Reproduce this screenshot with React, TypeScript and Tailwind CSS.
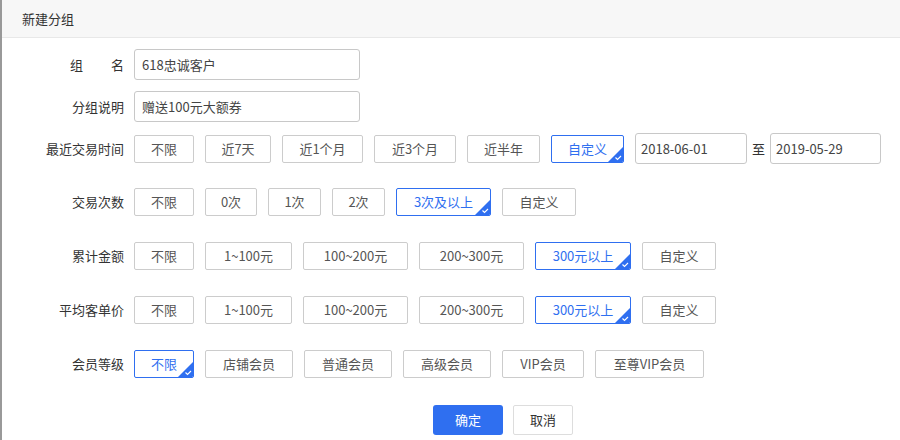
const FONT = { fontFamily: '"Noto Sans CJK SC", "Liberation Sans", sans-serif' };

type Opt = { t: string; w: number; on?: boolean };

function Chip({ t, w, on }: Opt) {
  return (
    <div
      className={`relative flex h-[28px] shrink-0 items-center justify-center overflow-hidden rounded-[2px] border text-[13px] ${
        on ? "border-[#2f6ff0] text-[#2f6ff0]" : "border-[#cccccc] text-[#555]"
      }`}
      style={{ width: w }}
    >
      {t}
      {on && (
        <svg className="absolute bottom-0 right-0" width="15" height="15" viewBox="0 0 15 15">
          <polygon points="15,0 15,15 0,15" fill="#2f6ff0" />
          <path d="M7.5 10.5 L9.5 12.5 L13 9" stroke="#fff" strokeWidth="1.1" fill="none" />
        </svg>
      )}
    </div>
  );
}

function Row({ label, opts, mt, children }: { label: string; opts: Opt[]; mt: string; children?: React.ReactNode }) {
  return (
    <div className={`flex items-center ${mt}`}>
      <div className="w-[122px] shrink-0 pr-0 text-right text-[13px] text-[#333]">{label}</div>
      <div className="ml-[10px] flex items-center gap-[11px]">
        {opts.map((o) => (
          <Chip key={o.t} {...o} />
        ))}
        {children}
      </div>
    </div>
  );
}

const money = (last: boolean): Opt[] => [
  { t: "不限", w: 60 },
  { t: "1~100元", w: 87 },
  { t: "100~200元", w: 105 },
  { t: "200~300元", w: 105 },
  { t: "300元以上", w: 96, on: last },
  { t: "自定义", w: 74 },
];

export default function App() {
  return (
    <div className="h-[440px] w-[900px] border-l-2 border-[#999] bg-white" style={FONT}>
      <div className="flex h-[38px] items-center border-b border-[#e8e8e8] bg-[#f7f7f7] pl-[20px] text-[13px] text-[#333]">
        新建分组
      </div>
      <div className="pt-[11px]">
        <div className="flex items-center">
          <div className="flex w-[122px] justify-end text-[13px] text-[#333]">
            <span className="flex w-[54px] justify-between">
              <span>组</span>
              <span>名</span>
            </span>
          </div>
          <div className="ml-[10px] flex h-[31px] w-[226px] items-center rounded-[3px] border border-[#c8c8c8] px-[7px] text-[13px] text-[#444]">
            618忠诚客户
          </div>
        </div>
        <div className="mt-[11px] flex items-center">
          <div className="w-[122px] text-right text-[13px] text-[#333]">分组说明</div>
          <div className="ml-[10px] flex h-[31px] w-[226px] items-center rounded-[3px] border border-[#c8c8c8] px-[7px] text-[13px] text-[#444]">
            赠送100元大额券
          </div>
        </div>
        <Row
          label="最近交易时间"
          mt="mt-[11px]"
          opts={[
            { t: "不限", w: 60 },
            { t: "近7天", w: 66 },
            { t: "近1个月", w: 81 },
            { t: "近3个月", w: 82 },
            { t: "近半年", w: 73 },
            { t: "自定义", w: 73, on: true },
          ]}
        >
          <div className="flex h-[31px] w-[112px] items-center rounded-[3px] border border-[#c8c8c8] px-[5px] text-[13px] text-[#444]">
            2018-06-01
          </div>
          <span className="-mx-[6px] text-[13px] text-[#333]">至</span>
          <div className="flex h-[31px] w-[111px] items-center rounded-[3px] border border-[#c8c8c8] px-[5px] text-[13px] text-[#444]">
            2019-05-29
          </div>
        </Row>
        <Row
          label="交易次数"
          mt="mt-[24px]"
          opts={[
            { t: "不限", w: 60 },
            { t: "0次", w: 52 },
            { t: "1次", w: 53 },
            { t: "2次", w: 53 },
            { t: "3次及以上", w: 95, on: true },
            { t: "自定义", w: 74 },
          ]}
        />
        <Row label="累计金额" mt="mt-[26px]" opts={money(true)} />
        <Row label="平均客单价" mt="mt-[26px]" opts={money(true)} />
        <Row
          label="会员等级"
          mt="mt-[26px]"
          opts={[
            { t: "不限", w: 60, on: true },
            { t: "店铺会员", w: 88 },
            { t: "普通会员", w: 88 },
            { t: "高级会员", w: 88 },
            { t: "VIP会员", w: 82 },
            { t: "至尊VIP会员", w: 109 },
          ]}
        />
        <div className="mt-[27px] flex justify-center gap-[10px] pl-[104px]">
          <button className="h-[30px] w-[70px] rounded-[3px] bg-[#2f6ff0] text-[13px] text-white">确定</button>
          <button className="h-[30px] w-[60px] rounded-[2px] border border-[#ddd] bg-white text-[13px] text-[#333]">取消</button>
        </div>
      </div>
    </div>
  );
}
